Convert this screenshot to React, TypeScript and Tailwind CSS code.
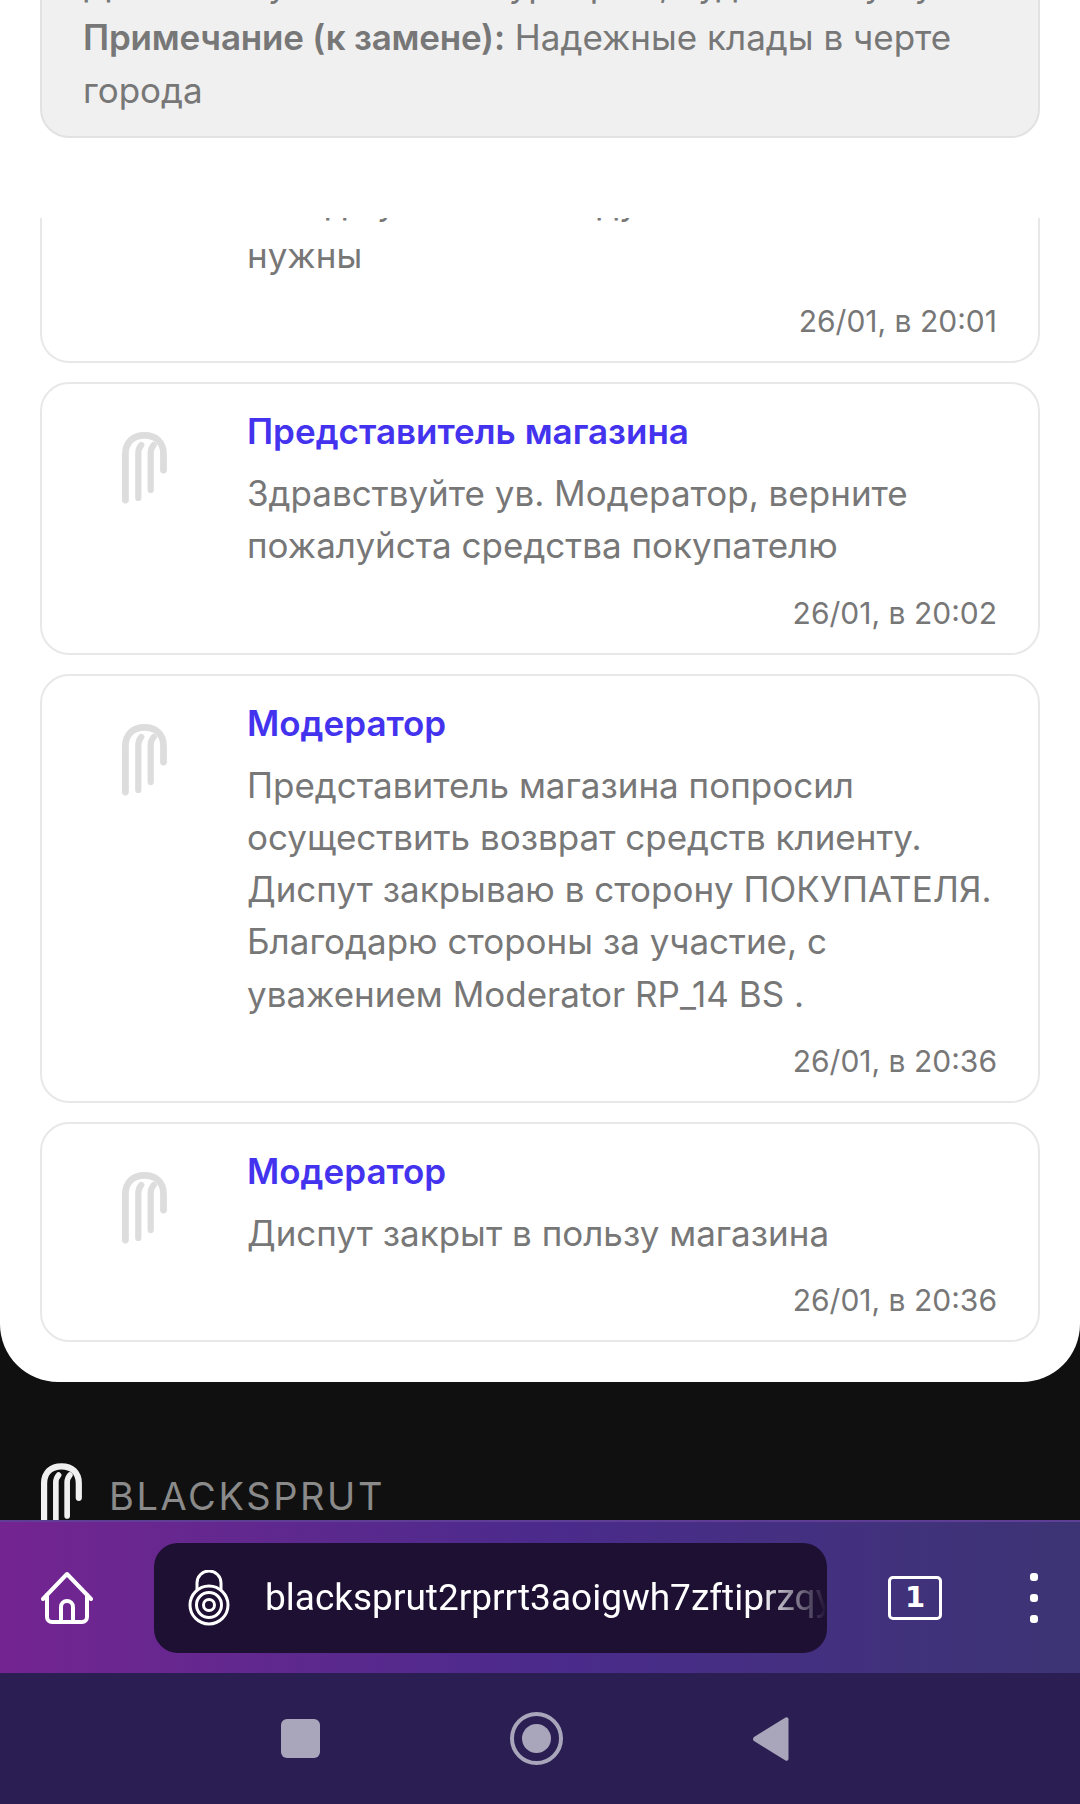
const sans = 'font-["Inter","Liberation_Sans",sans-serif]';

function SproutLogo({ className }: { className: string }) {
  return (
    <svg viewBox="0 0 45 72" fill="none" stroke="currentColor" strokeLinecap="round" className={className}>
      <path strokeWidth="6.8" d="M3.4 68V22C3.4 10.5 11 3.4 22.5 3.4S41.5 10.5 41.5 22V38" />
      <path strokeWidth="6.2" d="M16.3 66V21c0-3 .8-5.500 3-8" />
      <path strokeWidth="6.2" d="M28.7 58V21c0-3 .8-5.500 3-8" />
    </svg>
  );
}

function Message({ author, lines, time }: { author: string; lines: string[]; time: string }) {
  return (
    <div className="flex rounded-[29px] border-2 border-[#e8e8e8] bg-white pr-[41px] pt-[22px] pb-[17px]">
      <div className="w-[205px] shrink-0 pl-[80px] pt-[26px]">
        <SproutLogo className="h-[72px] w-[45px] text-[#dddddd]" />
      </div>
      <div className="min-w-0 flex-1">
        <div className="text-[35px] leading-[50px] font-semibold text-[#4433ee]">{author}</div>
        <div className="mt-[11px] text-[35px] leading-[52.3px] text-[#777777]">
          {lines.map((line) => (
            <div key={line}>{line}</div>
          ))}
        </div>
        <div className="mt-[19px] text-right text-[30px] leading-[45px] text-[#777777]">{time}</div>
      </div>
    </div>
  );
}

export default function App() {
  return (
    <div className={`flex h-[1804px] w-[1080px] flex-col overflow-hidden bg-[#101010] ${sans}`}>
      <div className="h-[1382px] shrink-0 overflow-hidden rounded-b-[58px] bg-white px-[40px]">
        <div className="mt-[-63px] h-[201px] rounded-[29px] border-2 border-[#e2e2e2] bg-[#f0f0f0] px-[41px] pt-[19px] text-[35px] leading-[53px] text-[#777777]">
          <div className="whitespace-nowrap">Для связи указан чат с курьером, куда и кому нужно</div>
          <div className="whitespace-nowrap">
            <b className="font-semibold tracking-[-0.2px]">Примечание (к замене):</b> Надежные клады в черте
          </div>
          <div>города</div>
        </div>
        <div className="mt-[80px] flex h-[1164px] flex-col gap-[19px] overflow-hidden">
          <div className="flex shrink-0 flex-col rounded-b-[29px] border-x-2 border-b-2 border-[#e8e8e8] bg-white pr-[41px]">
            <div className="pl-[205px] text-[35px] leading-[52.5px] text-[#777777]">
              <div className="mt-[-42px] whitespace-nowrap">Всегда у нас все на душе</div>
              <div>нужны</div>
            </div>
            <div className="mt-[18px] pb-[17px] text-right text-[30px] leading-[45px] text-[#777777]">26/01, в 20:01</div>
          </div>
          <Message author="Представитель магазина" lines={['Здравствуйте ув. Модератор, верните', 'пожалуйста средства покупателю']} time="26/01, в 20:02" />
          <Message
            author="Модератор"
            lines={[
              'Представитель магазина попросил',
              'осуществить возврат средств клиенту.',
              'Диспут закрываю в сторону ПОКУПАТЕЛЯ.',
              'Благодарю стороны за участие, с',
              'уважением Moderator RP_14 BS .',
            ]}
            time="26/01, в 20:36"
          />
          <Message author="Модератор" lines={['Диспут закрыт в пользу магазина']} time="26/01, в 20:36" />
        </div>
      </div>

      <div className="flex h-[138px] shrink-0 items-start overflow-hidden pl-[41px] pt-[78px]">
        <SproutLogo className="h-[72px] w-[41px] shrink-0 text-[#f0f0f0]" />
        <span className="ml-[27px] mt-[11px] text-[38px] leading-[50px] font-normal tracking-[2.6px] text-[#8a8a8a]">BLACKSPRUT</span>
      </div>

      <div className="flex h-[153px] shrink-0 items-center border-t-2 border-[#5f3f96] bg-gradient-to-r from-[#742491] via-[#4b2a8c] to-[#3c3474]">
        <svg viewBox="0 0 52 54" fill="none" stroke="white" strokeWidth="4" strokeLinecap="round" strokeLinejoin="round" className="ml-[41px] h-[54px] w-[52px] shrink-0">
          <path d="M2 28 26 3l24 25" />
          <path d="M6 24v22a5 5 0 0 0 5 5h30a5 5 0 0 0 5-5V24" />
          <path d="M20 51V36a6 6 0 0 1 12 0v15" />
        </svg>
        <div className="ml-[61px] flex h-[110px] w-[673px] shrink-0 items-center overflow-hidden rounded-[24px] bg-[#1d1033] pl-[34px]">
          <svg viewBox="0 0 42 56" fill="none" stroke="white" strokeWidth="3" className="h-[56px] w-[42px] shrink-0">
            <path d="M9 20v-7a12 12 0 0 1 24 0v7" />
            <circle cx="21" cy="35" r="19" />
            <circle cx="21" cy="35" r="12.5" />
            <circle cx="21" cy="35" r="5.500" />
          </svg>
          <span className="ml-[35px] block min-w-0 flex-1 overflow-hidden whitespace-nowrap text-[37px] leading-[50px] text-white [font-family:Roboto,sans-serif] [mask-image:linear-gradient(to_right,black_88%,transparent_100%)]">
            blacksprut2rprrt3aoigwh7zftiprzqyabc
          </span>
        </div>
        <div className="ml-[61px] flex h-[44px] w-[54px] shrink-0 items-center justify-center rounded-[5px] border-[3.5px] border-white text-[29px] leading-none font-bold text-white [font-family:'DejaVu_Sans',sans-serif]">
          1
        </div>
        <div className="ml-[88px] flex shrink-0 flex-col gap-[13px]">
          <div className="h-[8px] w-[8px] rounded-[3px] bg-white" />
          <div className="h-[8px] w-[8px] rounded-[3px] bg-white" />
          <div className="h-[8px] w-[8px] rounded-[3px] bg-white" />
        </div>
      </div>

      <div className="flex flex-1 items-center bg-[#2a1e52] pl-[281px]">
        <div className="h-[39px] w-[39px] rounded-[6px] bg-[#a9a6bb]" />
        <div className="ml-[190px] flex h-[53px] w-[53px] items-center justify-center rounded-full border-[4px] border-[#a9a6bb]">
          <div className="h-[29px] w-[29px] rounded-full bg-[#a9a6bb]" />
        </div>
        <svg viewBox="0 0 36 46" className="ml-[189px] h-[46px] w-[37px] fill-[#a9a6bb]">
          <path d="M33 1.5 1.5 21a2.5 2.5 0 0 0 0 4L33 44.5a2 2 0 0 0 3-1.7V3.2a2 2 0 0 0-3-1.7Z" />
        </svg>
      </div>
    </div>
  );
}
